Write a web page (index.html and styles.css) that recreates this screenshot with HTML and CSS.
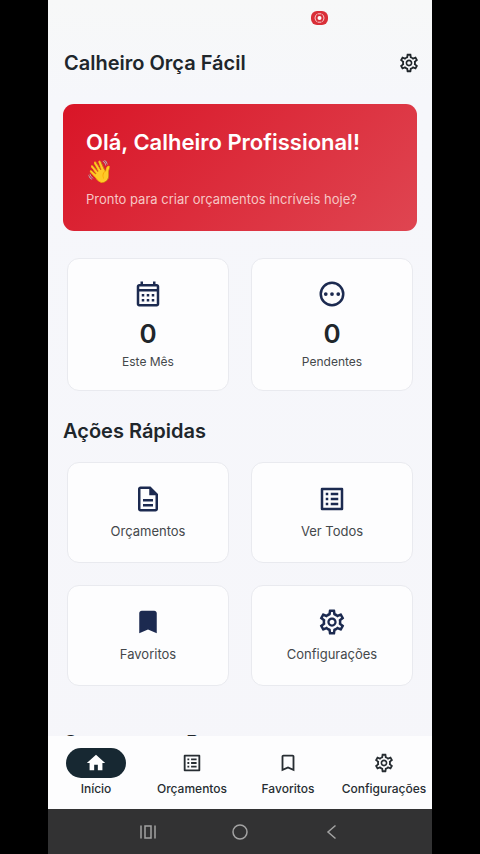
FILE: index.html
```html
<!DOCTYPE html>
<html lang="pt-BR">
<head>
<meta charset="utf-8">
<meta name="viewport" content="width=device-width, initial-scale=1">
<title>Calheiro Orça Fácil</title>
<link rel="stylesheet" href="styles.css">
</head>
<body>
<svg class="sprite" aria-hidden="true">
  <symbol id="gear" viewBox="0 0 24 24"><path d="M19.43 12.98c.04-.32.07-.64.07-.98 0-.34-.03-.66-.07-.98l2.11-1.65c.19-.15.24-.42.12-.64l-2-3.46c-.09-.16-.26-.25-.44-.25-.06 0-.12.01-.17.03l-2.49 1c-.52-.4-1.08-.73-1.69-.98l-.38-2.65C14.46 2.18 14.25 2 14 2h-4c-.25 0-.46.18-.49.42l-.38 2.65c-.61.25-1.17.59-1.69.98l-2.49-1c-.06-.02-.12-.03-.18-.03-.17 0-.34.09-.43.25l-2 3.46c-.13.22-.07.49.12.64l2.11 1.65c-.04.32-.07.65-.07.98 0 .33.03.66.07.98l-2.11 1.65c-.19.15-.24.42-.12.64l2 3.46c.09.16.26.25.44.25.06 0 .12-.01.17-.03l2.49-1c.52.4 1.08.73 1.69.98l.38 2.65c.03.24.24.42.49.42h4c.25 0 .46-.18.49-.42l.38-2.65c.61-.25 1.17-.59 1.69-.98l2.49 1c.06.02.12.03.18.03.17 0 .34-.09.43-.25l2-3.46c.12-.22.07-.49-.12-.64l-2.11-1.65zm-1.98-1.71c.04.31.05.52.05.73 0 .21-.02.43-.05.73l-.14 1.13.89.7 1.08.84-.7 1.21-1.27-.51-1.04-.42-.9.68c-.43.32-.84.56-1.25.73l-1.06.43-.16 1.13-.2 1.35h-1.4l-.19-1.35-.16-1.13-1.06-.43c-.43-.18-.83-.41-1.23-.71l-.91-.7-1.06.43-1.27.51-.7-1.21 1.08-.84.89-.7-.14-1.13c-.03-.31-.05-.54-.05-.74s.02-.43.05-.73l.14-1.13-.89-.7-1.08-.84.7-1.21 1.27.51 1.04.42.9-.68c.43-.32.84-.56 1.25-.73l1.06-.43.16-1.13.2-1.35h1.39l.19 1.35.16 1.13 1.06.43c.43.18.83.41 1.23.71l.91.7 1.06-.43 1.27-.51.7 1.21-1.07.85-.89.7.14 1.13zM12 8.300c-2.040 0-3.700 1.660-3.700 3.700s1.660 3.700 3.700 3.700 3.700-1.660 3.700-3.700-1.660-3.700-3.700-3.700zm0 5.600c-1.050 0-1.900-.85-1.900-1.900s.85-1.900 1.900-1.900 1.900.85 1.900 1.900-.85 1.900-1.900 1.900z"/></symbol>
  <symbol id="calendar" viewBox="0 0 24 24"><path d="M19 4h-1V2h-2v2H8V2H6v2H5c-1.110 0-2 .9-2 2v14c0 1.100.89 2 2 2h14c1.100 0 2-.9 2-2V6c0-1.100-.9-2-2-2zm0 16H5V10h14v10zm0-12H5V6h14v2zM9 14H7v-2h2v2zm4 0h-2v-2h2v2zm4 0h-2v-2h2v2zm-8 4H7v-2h2v2zm4 0h-2v-2h2v2zm4 0h-2v-2h2v2z"/></symbol>
  <symbol id="pending" viewBox="0 0 24 24"><circle cx="12" cy="12" r="9" fill="none" stroke="currentColor" stroke-width="2"/><circle cx="7" cy="12" r="1.500"/><circle cx="12" cy="12" r="1.500"/><circle cx="17" cy="12" r="1.500"/></symbol>
  <symbol id="document" viewBox="0 0 24 24"><path d="M8 16h8v2H8zm0-4h8v2H8zm6-10H6c-1.100 0-2 .9-2 2v16c0 1.100.89 2 2 2h12c1.100 0 2-.9 2-2V8l-6-6zm4 18H6V4h7v5h5v11z"/></symbol>
  <symbol id="list" viewBox="0 0 24 24"><path fill-rule="evenodd" d="M4 3h16a1 1 0 0 1 1 1v16a1 1 0 0 1-1 1H4a1 1 0 0 1-1-1V4a1 1 0 0 1 1-1zm1 2v14h14V5zM7 7h2v2H7zm4 0h6v2h-6zM7 11h2v2H7zm4 0h6v2h-6zM7 15h2v2H7zm4 0h6v2h-6z"/></symbol>
  <symbol id="bookmark" viewBox="0 0 24 24"><path d="M17 3H7c-1.100 0-2 .9-2 2v16l7-3 7 3V5c0-1.100-.9-2-2-2z"/></symbol>
  <symbol id="bookmark-outline" viewBox="0 0 24 24"><path d="M17 3H7c-1.100 0-2 .9-2 2v16l7-3 7 3V5c0-1.100-.9-2-2-2zm0 15l-5-2.180L7 18V5h10v13z"/></symbol>
  <symbol id="home" viewBox="0 0 24 24"><path d="M10 20v-6h4v6h5v-8h3L12 3 2 12h3v8z"/></symbol>
</svg>

<div class="phone">
  <div class="statusbar">
    <span class="recording" role="img" aria-label="Gravando a tela">
      <svg viewBox="0 0 16 14"><circle cx="8" cy="7" r="2"/><path d="M6 3Q3.500 4 3.500 7T6 11M10 3q2.500 1 2.500 4T10 11M6.500 2.800h3M6.500 11.200h3"/></svg>
    </span>
  </div>

  <header class="appbar">
    <h1 class="heading">Calheiro Orça Fácil</h1>
    <button class="icon-button" type="button" aria-label="Configurações"><svg class="icon-small"><use href="#gear"/></svg></button>
  </header>

  <main class="content">
    <section class="hero">
      <h2 class="hero-title">Olá, Calheiro Profissional!<br>👋</h2>
      <p class="hero-text">Pronto para criar orçamentos incríveis hoje?</p>
    </section>

    <section class="grid stats">
      <article class="card stat">
        <svg class="icon"><use href="#calendar"/></svg>
        <strong class="stat-value">0</strong>
        <span class="stat-label">Este Mês</span>
      </article>
      <article class="card stat">
        <svg class="icon"><use href="#pending"/></svg>
        <strong class="stat-value">0</strong>
        <span class="stat-label">Pendentes</span>
      </article>
    </section>

    <h2 class="heading">Ações Rápidas</h2>
    <section class="grid actions">
      <button class="card action" type="button"><svg class="icon"><use href="#document"/></svg>Orçamentos</button>
      <button class="card action" type="button"><svg class="icon"><use href="#list"/></svg>Ver Todos</button>
      <button class="card action" type="button"><svg class="icon"><use href="#bookmark"/></svg>Favoritos</button>
      <button class="card action" type="button"><svg class="icon"><use href="#gear"/></svg>Configurações</button>
    </section>

    <h2 class="heading">Orçamentos Recentes</h2>
  </main>

  <nav class="tabs">
    <a class="tab active" href="#"><span class="pill"><svg class="icon-small"><use href="#home"/></svg></span>Início</a>
    <a class="tab" href="#"><span class="pill"><svg class="icon-small"><use href="#list"/></svg></span>Orçamentos</a>
    <a class="tab" href="#"><span class="pill"><svg class="icon-small"><use href="#bookmark-outline"/></svg></span>Favoritos</a>
    <a class="tab" href="#"><span class="pill"><svg class="icon-small"><use href="#gear"/></svg></span>Configurações</a>
  </nav>

  <div class="system">
    <button class="system-button" type="button" aria-label="Recentes"><svg viewBox="0 0 16 16"><path d="M1 1.500v13M15 1.500v13M5 2h6v12H5z"/></svg></button>
    <button class="system-button" type="button" aria-label="Tela inicial"><svg viewBox="0 0 16 16"><circle cx="8" cy="8" r="7"/></svg></button>
    <button class="system-button" type="button" aria-label="Voltar"><svg viewBox="0 0 16 16"><path d="M11.500 1.500 4 8l7.500 6.500"/></svg></button>
  </div>
</div>
</body>
</html>
```
FILE: styles.css
```css
* {
  box-sizing: border-box;
}

body {
  margin: 0;
  background: #000;
  color: #20262b;
  font-family: Inter, Roboto, "Noto Color Emoji", sans-serif;
}

h1, h2, p {
  margin: 0;
}

button {
  padding: 0;
  border: 0;
  background: none;
  color: inherit;
  font: inherit;
}

svg {
  display: block;
  fill: currentColor;
}

.sprite {
  display: none;
}

.phone {
  display: flex;
  flex-direction: column;
  width: 80%;
  height: 100vh;
  margin: 0 auto;
  background: linear-gradient(#f7f8f8, #f6f7fb 12%, #f6f6fa);
}

.statusbar {
  display: flex;
  justify-content: flex-end;
  align-items: center;
  flex: none;
  height: 36px;
  padding-right: 104px;
}

.recording {
  width: 17px;
  height: 14px;
  border-radius: 6px;
  background: #d92f38;
}

.recording svg {
  width: 100%;
  height: 100%;
  fill: #fff;
}

.recording path {
  fill: none;
  stroke: #f7c9cb;
}

.appbar {
  display: flex;
  align-items: center;
  justify-content: space-between;
  flex: none;
  height: 54px;
  padding: 0 12px 0 16px;
}

.heading {
  font-size: 20px;
  font-weight: 600;
  line-height: 28px;
}

.icon-small {
  width: 22px;
  height: 22px;
}

.content {
  flex: 1;
  min-height: 0;
  overflow: hidden;
  padding: 14px 15px 0;
}

.hero {
  padding: 24px 23px 21px;
  border-radius: 11px;
  background: linear-gradient(135deg, #d91527, #df4551);
  color: #fff;
}

.hero-title {
  font-size: 22px;
  font-weight: 600;
  line-height: 29px;
}

.hero-text {
  margin-top: 3px;
  margin-bottom: 1px;
  color: #f6c6c4;
  font-size: 13px;
  line-height: 20px;
}

.grid {
  display: grid;
  grid-template-columns: 1fr 1fr;
  gap: 22px;
  padding: 0 4px;
}

.stats {
  margin: 27px 0 26px;
}

.actions {
  margin: 17px 0 43px;
}

.card {
  display: flex;
  flex-direction: column;
  align-items: center;
  border: 1px solid #e9eaef;
  border-radius: 12px;
  background: #fdfdfe;
}

.icon {
  width: 30px;
  height: 30px;
  color: #1c2a50;
}

.stat {
  padding: 20px 8px;
}

.stat-value {
  margin-top: 8px;
  font-size: 26px;
  font-weight: 600;
  line-height: 34px;
}

.stat-label {
  margin-top: 3px;
  color: #44484b;
  font-size: 12px;
  line-height: 16px;
}

.action {
  gap: 7px;
  padding: 21px 8px;
  color: #44484b;
  font-size: 13px;
  line-height: 20px;
}

.tabs {
  display: grid;
  grid-template-columns: repeat(4, 1fr);
  flex: none;
  padding: 12px 0;
  background: #fdfdfe;
}

.tab {
  display: flex;
  flex-direction: column;
  align-items: center;
  gap: 3px;
  color: #272d32;
  font-size: 12px;
  font-weight: 500;
  line-height: 16px;
  text-decoration: none;
}

.pill {
  display: grid;
  place-items: center;
  width: 60px;
  height: 30px;
  border-radius: 15px;
}

.active .pill {
  background: #172832;
  color: #fff;
}

.system {
  display: flex;
  align-items: center;
  justify-content: center;
  gap: 76px;
  flex: none;
  height: 45px;
  background: #323233;
}

.system-button {
  width: 16px;
  height: 16px;
}

.system-button svg {
  width: 100%;
  height: 100%;
  fill: none;
  stroke: #a3a3a3;
  stroke-width: 1.5;
}
```
